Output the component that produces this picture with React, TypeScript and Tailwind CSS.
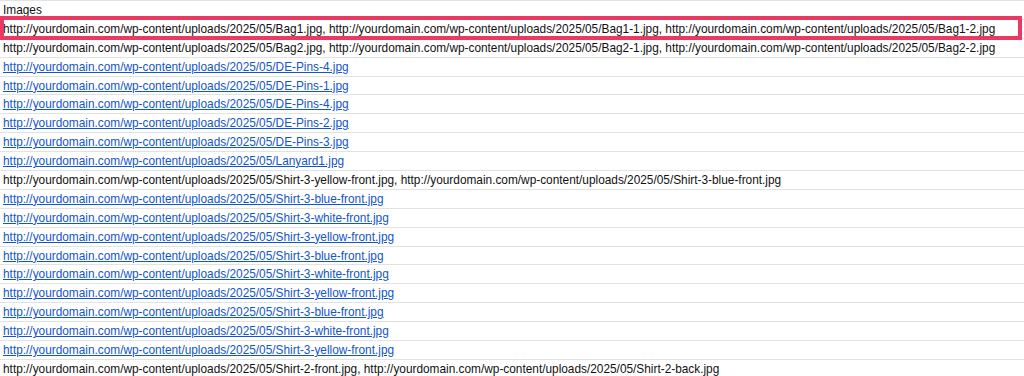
import React from "react";

const B = "http://yourdomain.com/wp-content/uploads/2025/05/";

type Row = { text: string; link?: boolean };

const rows: Row[] = [
  { text: `${B}Bag1.jpg, ${B}Bag1-1.jpg, ${B}Bag1-2.jpg` },
  { text: `${B}Bag2.jpg, ${B}Bag2-1.jpg, ${B}Bag2-2.jpg` },
  { text: `${B}DE-Pins-4.jpg`, link: true },
  { text: `${B}DE-Pins-1.jpg`, link: true },
  { text: `${B}DE-Pins-4.jpg`, link: true },
  { text: `${B}DE-Pins-2.jpg`, link: true },
  { text: `${B}DE-Pins-3.jpg`, link: true },
  { text: `${B}Lanyard1.jpg`, link: true },
  { text: `${B}Shirt-3-yellow-front.jpg, ${B}Shirt-3-blue-front.jpg` },
  { text: `${B}Shirt-3-blue-front.jpg`, link: true },
  { text: `${B}Shirt-3-white-front.jpg`, link: true },
  { text: `${B}Shirt-3-yellow-front.jpg`, link: true },
  { text: `${B}Shirt-3-blue-front.jpg`, link: true },
  { text: `${B}Shirt-3-white-front.jpg`, link: true },
  { text: `${B}Shirt-3-yellow-front.jpg`, link: true },
  { text: `${B}Shirt-3-blue-front.jpg`, link: true },
  { text: `${B}Shirt-3-white-front.jpg`, link: true },
  { text: `${B}Shirt-3-yellow-front.jpg`, link: true },
  { text: `${B}Shirt-2-front.jpg, ${B}Shirt-2-back.jpg` },
];

export default function App() {
  return (
    <div
      className="relative w-[1024px] h-[376px] overflow-hidden bg-white text-[11.85px] text-[#111111]"
      style={{ fontFamily: '"Liberation Sans", Arial, sans-serif' }}
    >
      <div className="flex flex-col border-t border-[#e2e2e2]">
        <div className="h-[18.9px] border-b border-[#e2e2e2] pl-[3px] leading-[18px] whitespace-nowrap">
          Images
        </div>
        {rows.map((r, i) => (
          <div
            key={i}
            className="h-[18.9px] border-b border-[#e2e2e2] pl-[3px] leading-[18px] whitespace-nowrap"
          >
            {r.link ? (
              <span className="text-[#1155cc] underline">{r.text}</span>
            ) : (
              <span>{r.text}</span>
            )}
          </div>
        ))}
      </div>
      <div className="absolute left-0 top-[16px] w-[1022px] h-[24px] border-4 border-[#ea3a62]" />
    </div>
  );
}
